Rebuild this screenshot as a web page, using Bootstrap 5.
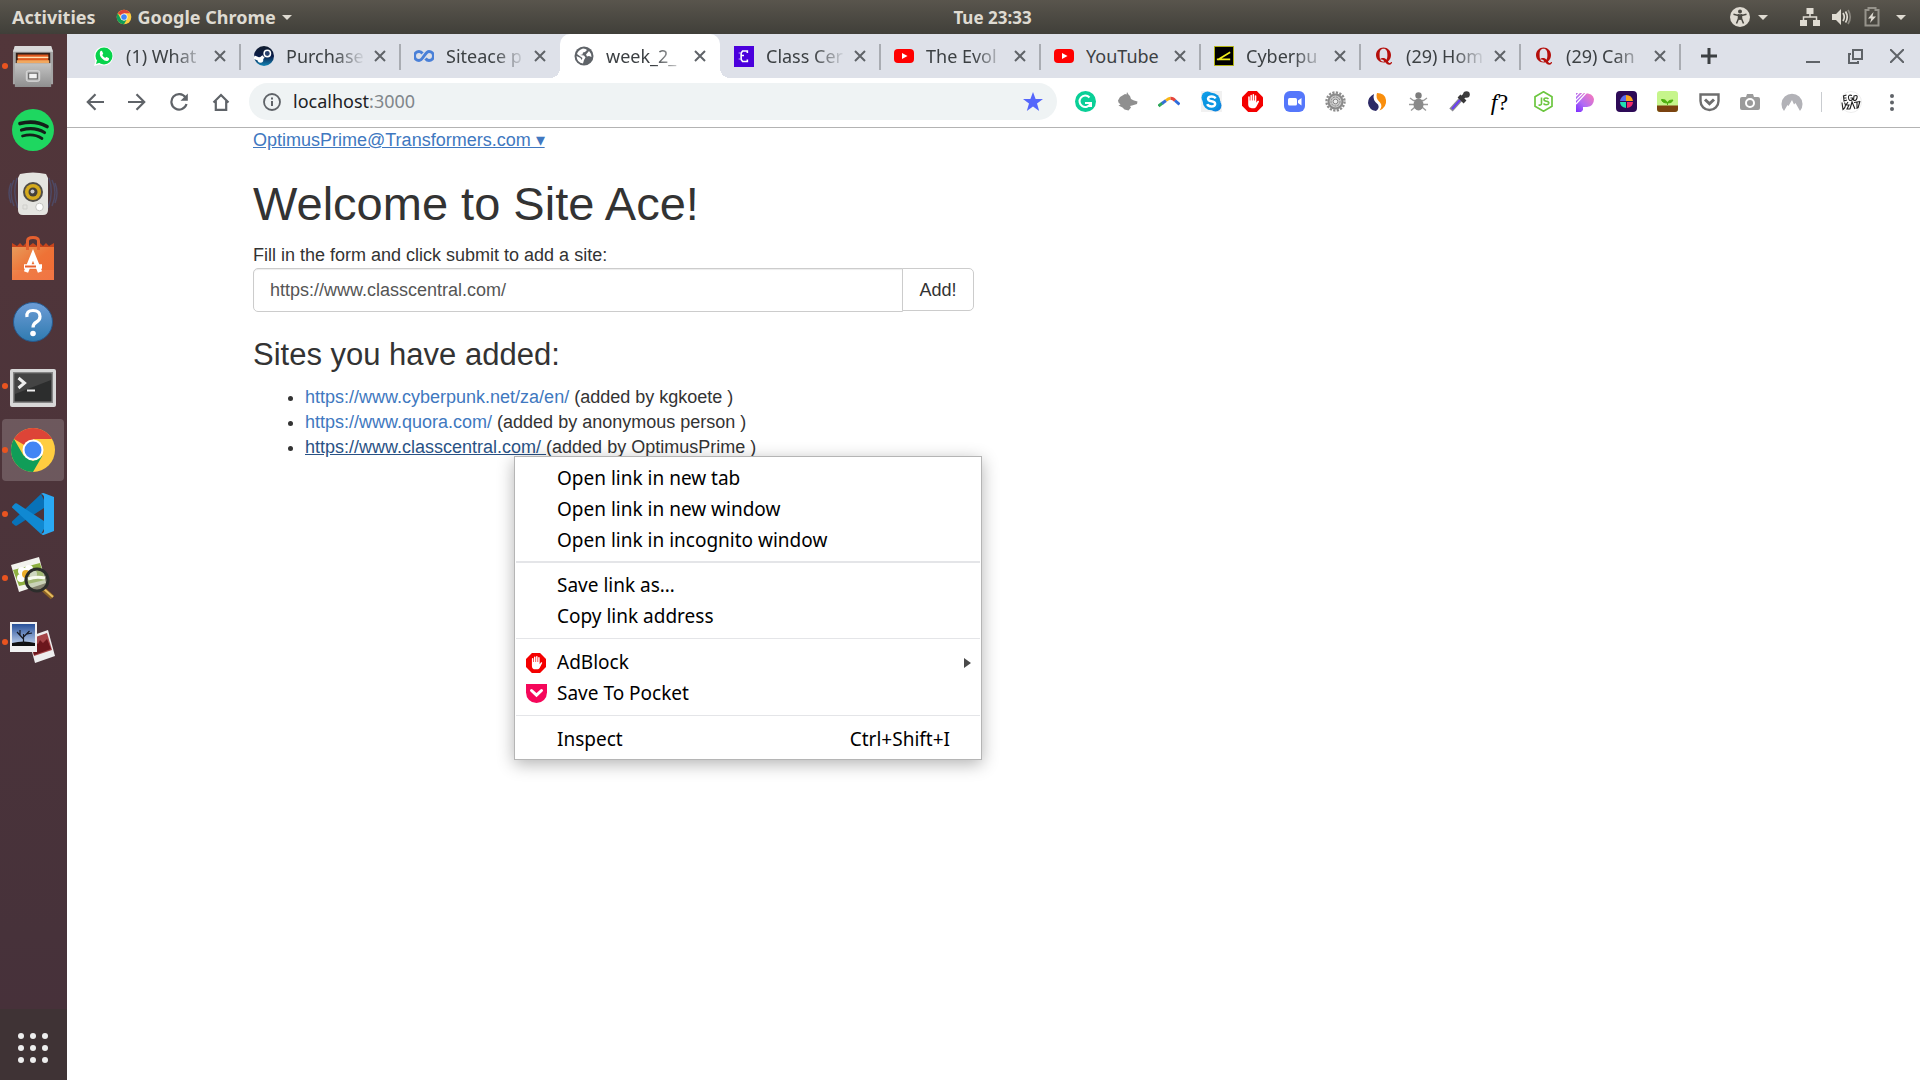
<!DOCTYPE html>
<html lang="en">
<head>
<meta charset="utf-8">
<meta name="viewport" content="width=device-width, initial-scale=1">
<title>Site Ace</title>
<link href="https://cdn.jsdelivr.net/npm/bootstrap@5.3.0/dist/css/bootstrap.min.css" rel="stylesheet">
<style>
  body { font-family: "Noto Sans", sans-serif; font-size: 18px; line-height: 25px; color: #333; background: #fff; }
  button.plain { border: 0; background: none; padding: 0; color: inherit; font: inherit; display: flex; align-items: center; justify-content: center; }
  svg { display: block; flex: none; }

  /* desktop panel */
  .sys-bar { height: 34px; background: linear-gradient(#59554d, #403f39); color: #dfdbd2; font-weight: 700; padding: 0 14px 0 12px; }
  .sys-side { flex: 1 1 0; }
  .sys-side .app-menu { margin-left: 20px; gap: 6px; }
  .sys-clock { margin-left: 67px; font-size: 17px; }
  .arrow-down { border: 5px solid transparent; border-top-color: #dfdbd2; border-bottom: 0; width: 10px; }

  /* dock */
  .dock { width: 67px; padding-right: 1px; background: linear-gradient(#52363a, #47323a 900px, #47313a calc(100% - 71px), #3f3335 calc(100% - 71px)); }
  .dock-item { height: 64px; position: relative; }
  .dock-item.running::before { content: ""; position: absolute; left: 2px; top: 29px; width: 6px; height: 6px; border-radius: 50%; background: #e95420; z-index: 1; }
  .dock-item.current::after { content: ""; position: absolute; inset: 1px 2px 1px 2px; border-radius: 4px; background: rgba(255,255,255,.18); }
  .dock-item svg { position: relative; z-index: 1; }
  .dock-apps { height: 64px; }

  /* tab strip */
  .tab-strip { height: 44px; background: #dee1e9; padding-left: 13px; color: #3c4043; }
  .web-tab { width: 160px; position: relative; padding-left: 14px; }
  .web-tab .tab-name { width: 80px; margin-left: 12px; overflow: hidden; white-space: nowrap; -webkit-mask-image: linear-gradient(90deg, #000 60%, transparent); mask-image: linear-gradient(90deg, #000 60%, transparent); }
  .web-tab.short .tab-name { -webkit-mask-image: none; mask-image: none; }
  .web-tab .tab-close { width: 20px; height: 20px; margin-left: 4px; color: #5f6368; }
  .web-tab.ruled::after { content: ""; position: absolute; right: -1px; top: 10px; width: 2px; height: 26px; background: #a9acb2; }
  .web-tab.open { background: #fff; border-radius: 10px 10px 0 0; }
  .web-tab.open::before, .web-tab.open::after { content: ""; position: absolute; bottom: 0; width: 10px; height: 10px; }
  .web-tab.open::before { left: -10px; background: radial-gradient(circle at 0 0, transparent 10px, #fff 10px); }
  .web-tab.open::after { right: -10px; background: radial-gradient(circle at 100% 0, transparent 10px, #fff 10px); }
  .strip-btn { width: 42px; height: 44px; }
  .window-btns { color: #5f6368; padding-right: 2px; }

  /* toolbar */
  .tool-bar { height: 50px; border-bottom: 1px solid #b3b3b3; padding: 0 18px 2px 18px; color: #5f6368; }
  .nav-btns { gap: 2px; margin-left: -10px; }
  .nav-btn { width: 40px; height: 36px; }
  .address { height: 37px; border-radius: 19px; background: #eff3f4; margin-left: 8px; padding: 0 14px; }
  .address-text { color: #202124; margin-left: 12px; text-decoration: none; }
  .address-text span { color: #80868b; }
  .ext-row { width: 728px; margin-left: 18px; }
  .ext-rule { width: 1px; height: 20px; background: #c9ccd0; margin: 0 18px; }
  .menu-btn { margin-left: 20px; }
  .fn-glyph { font: 24px/20px "Liberation Serif", serif; color: #000; width: 22px; }

  /* site page */
  .site { font-family: "Liberation Sans", sans-serif; }
  .site .container { --bs-gutter-x: 40px; max-width: 1521px; }
  .site .row { --bs-gutter-x: 40px; }
  .login-line { line-height: 24px; }
  .site a { color: #4078c0; text-decoration: none; }
  .site .login-line a { text-decoration: underline; }
  .site h1 { font-size: 47px; line-height: 52px; margin: 26px 0 13px; font-weight: 400; }
  .site h3 { font-size: 31px; line-height: 34px; margin: 26px 0 13px; font-weight: 400; }
  .site form label { display: block; }
  .site .form-control { height: 44px; padding: 7px 16px; font-size: 18px; line-height: 26px; color: #555; border: 1px solid #ccc; border-radius: 5px; box-shadow: inset 0 1px 1px rgba(0,0,0,.075); }
  .site .btn-add { height: 43px; padding: 7px 16px; font-size: 18px; line-height: 26px; color: #333; background: #fff; border: 1px solid #ccc; border-radius: 5px; }
  .site ul { padding-left: 52px; margin: 0; }
  .site li a.hovered { color: #2a5285; text-decoration: underline; white-space: pre; }

  /* context menu */
  .link-menu { position: absolute; left: 514px; top: 456px; width: 468px; padding: 6px 1px 4px; background: #fff; border: 1px solid #b5b5b5; box-shadow: 0 4px 16px rgba(0,0,0,.3); color: #000; font-size: 19px; z-index: 5; }
  .link-menu .menu-row { width: 100%; height: 31px; padding: 0 30px 0 10px; justify-content: flex-start; }
  .menu-icon { width: 31px; flex: none; }
  .link-menu hr { margin: 6px 0 8px; border: 0; border-top: 1px solid #e4e5e8; opacity: 1; }
  .link-menu hr.thick { border-top-width: 2px; margin: 5px 0 7px; }
  .arrow-right { border: 5px solid transparent; border-left: 7px solid #4a4a4a; border-right: 0; margin-right: -21px; }
</style>
</head>
<body class="d-flex flex-column min-vh-100">
<svg width="0" height="0" class="position-absolute" aria-hidden="true">
  <defs>
    <linearGradient id="gSteam" x1="0" y1="0" x2="0" y2="1"><stop offset="0" stop-color="#111d2e"/><stop offset=".5" stop-color="#0a1b48"/><stop offset="1" stop-color="#1387b8"/></linearGradient>
    <linearGradient id="gSteel" x1="0" y1="0" x2="0" y2="1"><stop offset="0" stop-color="#c4c4c4"/><stop offset="1" stop-color="#8f8f8f"/></linearGradient>
    <linearGradient id="gBag" x1="0" y1="0" x2="1" y2="1"><stop offset="0" stop-color="#e79b5b"/><stop offset=".5" stop-color="#ee7236"/><stop offset="1" stop-color="#f06a35"/></linearGradient>
    <linearGradient id="gHelp" x1="0" y1="0" x2="0" y2="1"><stop offset="0" stop-color="#6d9cd6"/><stop offset="1" stop-color="#2f7bb0"/></linearGradient>
    <linearGradient id="gPat" x1="0" y1="1" x2="1" y2="0"><stop offset="0" stop-color="#7b2cff"/><stop offset=".4" stop-color="#b06cf5"/><stop offset="1" stop-color="#ff7bb5"/></linearGradient>
    <linearGradient id="gSky" x1="0" y1="0" x2="0" y2="1"><stop offset="0" stop-color="#27509a"/><stop offset="1" stop-color="#c7d8f0"/></linearGradient>
  </defs>
  <symbol id="i-x" viewBox="0 0 20 20"><path d="M5 5l10 10M15 5L5 15" stroke="currentColor" stroke-width="2" fill="none"/></symbol>
  <symbol id="i-chrome" viewBox="0 0 48 48">
    <circle cx="24" cy="24" r="22" fill="#ffcd40"/>
    <path d="M24 13h19.050A22 22 0 0 0 4.950 13L24 24z" fill="#dd4437"/>
    <path d="M4.950 13L14.500 29.500L24 35L33.500 29.500L24 46A22 22 0 0 1 4.950 13z" fill="#109d58"/>
    <circle cx="24" cy="24" r="10.500" fill="#fff"/><circle cx="24" cy="24" r="8.500" fill="#4285f4"/>
  </symbol>
  <symbol id="i-youtube" viewBox="0 0 20 20"><rect x="0" y="3" width="20" height="14" rx="4" fill="#f00"/><path d="M8 7l5.500 3L8 13z" fill="#fff"/></symbol>
  <symbol id="i-quora" viewBox="0 0 20 20"><path fill-rule="evenodd" fill="#b5100c" d="M9.500 1.500C5.400 1.500 2 4.800 2 9s3.400 7.500 7.500 7.500c.7 0 1.300-.1 1.900-.2.900 1.400 2 2.400 3.900 2.400 2 0 2.700-1.400 2.700-2.700h-1c-.1.600-.5 1-1.200 1-.8 0-1.400-.6-1.900-1.500C15.800 14.100 17 11.700 17 9c0-4.200-3.400-7.500-7.500-7.500zm0 1.200c2.900 0 3.900 2.300 3.900 6.300 0 2-.3 3.600-.9 4.700-.8-1-1.900-1.700-3.500-1.700-1.300 0-2.100.4-2.700.9l.5.900c.2-.1.5-.2.900-.2 1.400 0 2 .9 2.600 2-.3.100-.5.100-.8.100-2.900 0-3.900-2.500-3.900-6.700s1-6.300 3.900-6.300z"/></symbol>
  <symbol id="i-adblock" viewBox="0 0 22 22"><path d="M6.500 0h9L22 6.500v9L15.500 22h-9L0 15.500v-9z" fill="#f40000"/><path d="M6.500 12V6.200a.8.800 0 0 1 1.600 0V10h.7V4.700a.8.800 0 0 1 1.600 0V10h.7V4a.8.800 0 0 1 1.600 0v6h.7V5.300a.8.800 0 0 1 1.600 0v7l1.200-1.700c.7-.9 2-.3 1.500.8l-2.700 5c-.6 1-1.500 1.600-2.800 1.600h-2c-2.300 0-3.700-1.500-3.700-3.800z" fill="#fff"/></symbol>
</svg>

<header class="sys-bar d-flex align-items-center">
  <div class="sys-side d-flex align-items-center">
    <button class="plain" type="button">Activities</button>
    <button class="plain app-menu" type="button"><svg width="16" height="16"><use href="#i-chrome"/></svg>Google Chrome<span class="arrow-down"></span></button>
  </div>
  <div class="sys-clock">Tue 23:33</div>
  <div class="sys-side d-flex align-items-center justify-content-end">
    <svg width="20" height="20" viewBox="0 0 20 20"><circle cx="10" cy="10" r="10" fill="#dfdbd2"/><circle cx="10" cy="4.500" r="2" fill="#4a4842"/><path d="M3.500 7.200l5 1.300v3L6.500 16.500M16.500 7.200l-5 1.300v3l2 5M8.500 8h3v4h-3z" stroke="#4a4842" stroke-width="1.500" fill="#4a4842" fill-opacity="0"/><path d="M8.500 8h3v4.500h-3z" fill="#4a4842"/></svg>
    <span class="arrow-down ms-2 me-4"></span>
    <svg class="ms-2 me-2" width="20" height="20" viewBox="0 0 20 20" fill="#dfdbd2"><path d="M6.500 1h7v6h-7zM0 13h7v6H0zM13 13h7v6h-7z"/><path d="M10 6v4M3.500 14v-4h13v4" fill="none" stroke="#dfdbd2" stroke-width="1.500"/></svg>
    <svg class="ms-1 me-2" width="20" height="20" viewBox="0 0 20 20"><path d="M0 7h4l5-5v16l-5-5H0z" fill="#dfdbd2"/><path d="M11 6q2.500 4 0 8M13.500 4.500q3.500 5.500 0 11" stroke="#dfdbd2" stroke-width="1.700" fill="none"/><path d="M16 3q4.500 7 0 14" stroke="#8a877f" stroke-width="1.700" fill="none"/></svg>
    <svg class="ms-1 me-2" width="16" height="20" viewBox="0 0 16 20"><path d="M1.500 3h3V1h7v2h3v15.500h-13z" fill="none" stroke="#96938b" stroke-width="2"/><path d="M9.500 5L4 11.500h3.300L6 16l6-6.500H8.500z" fill="#dfdbd2"/></svg>
    <span class="arrow-down ms-2"></span>
  </div>
</header>

<div class="d-flex flex-grow-1">
  <nav class="dock d-flex flex-column" aria-label="Dock">
    <button type="button" class="plain dock-item running" aria-label="Files"><svg width="42" height="44" viewBox="0 0 44 46"><path d="M3 2h38l2 6v34H1V8z" fill="#a5a5a5"/><path d="M3 2h38l2 6H1z" fill="#d9d9d9"/><path d="M4 9h36v11H4z" fill="#33201a"/><path d="M6 11h32v9H6z" fill="#e0591d"/><path d="M6 14h32" stroke="#ffdfb0" stroke-width="1.500"/><path d="M5 17h34v3H5z" fill="#f0a860"/><path d="M3 20h38v25H3z" fill="url(#gSteel)"/><rect x="15" y="28" width="14" height="11" rx="2" fill="#bcbcbc" stroke="#dcdcdc"/><rect x="17.500" y="30.500" width="9" height="6" fill="#f2f2f2" stroke="#555"/></svg></button>
    <button type="button" class="plain dock-item" aria-label="Spotify"><svg width="42" height="42" viewBox="0 0 42 42"><circle cx="21" cy="21" r="21" fill="#1ed760"/><g fill="none" stroke="#14201a" stroke-linecap="round"><path d="M8 14.500q15-4 27 3" stroke-width="3.700"/><path d="M9.500 21q13-3.500 23 2.500" stroke-width="3.200"/><path d="M10.500 27q11-3 19.500 2.500" stroke-width="2.700"/></g></svg></button>
    <button type="button" class="plain dock-item" aria-label="Rhythmbox"><svg width="50" height="44" viewBox="0 0 50 44"><path d="M6 8q-6 12 0 26M3 11q-4 10 0 20M9 6q-5 15 1 30M44 8q6 12 0 26M47 11q4 10 0 20M41 6q5 15-1 30" fill="none" stroke="#4d5680" stroke-opacity=".6" stroke-width="1.500"/><path d="M12 2q13-3 26 0l2 4v32q0 5-5 5H15q-5 0-5-5V6z" fill="#e4e4e0"/><circle cx="25" cy="20" r="10" fill="#504d48"/><circle cx="25" cy="20" r="8" fill="#d5aa1c"/><circle cx="25" cy="20" r="4.500" fill="#45413b"/><circle cx="24.500" cy="19.500" r="2" fill="#ccc"/><circle cx="31.500" cy="35" r="3.800" fill="#fff" stroke="#c6c6c2"/><path d="M15 33h4v4h-4z" fill="none" stroke="#cfcfcb"/></svg></button>
    <button type="button" class="plain dock-item" aria-label="Ubuntu Software"><svg width="42" height="44" viewBox="0 0 42 44"><path d="M0 7l5 3 3-3 3 3 3-3 3 3 4-3 4 3 3-3 3 3 3-3 3 3 5-3v7H0z" fill="#c8451c"/><path d="M0 11h42v33H0z" fill="url(#gBag)"/><path d="M0 34h42v10H0z" fill="#fff" opacity=".07"/><path d="M15.500 14V5q0-3.500 5.500-3.500T26.500 5v9" fill="none" stroke="#e4602f" stroke-width="3"/><path d="M14 36l7-17 7 17M12 30.500h18" fill="none" stroke="#fff" stroke-width="4.500"/><path d="M13 30.500h11" stroke="#e8602c" stroke-width="2"/></svg></button>
    <button type="button" class="plain dock-item" aria-label="Help"><svg width="40" height="40" viewBox="0 0 40 40"><circle cx="20" cy="20" r="19.500" fill="url(#gHelp)" stroke="#27598d"/><path d="M14 15q-1-6.500 6-6.500t7 6q0 3.500-3.500 5.500T20 25.500" fill="none" stroke="#fff" stroke-width="3.200"/><circle cx="20" cy="31.500" r="2.800" fill="#fff"/></svg></button>
    <button type="button" class="plain dock-item running" aria-label="Terminal"><svg width="46" height="42" viewBox="0 -4 46 42"><rect width="46" height="38" rx="2" fill="#d8d8d8"/><rect x="3" y="3" width="40" height="31" fill="#858585"/><rect x="4.500" y="4.500" width="37" height="28" fill="#2c2d2d"/><path d="M5 5h36v6L5 25z" fill="#444"/><path d="M8.500 9l6 5-6 5" fill="none" stroke="#eee" stroke-width="3"/><path d="M17 21.500h8" stroke="#eee" stroke-width="2"/></svg></button>
    <button type="button" class="plain dock-item running current" aria-label="Google Chrome"><svg width="48" height="48"><use href="#i-chrome"/></svg></button>
    <button type="button" class="plain dock-item running" aria-label="Visual Studio Code"><svg width="42" height="42" viewBox="0 0 42 42"><path d="M0 28.500L29 1l3 6v8L5 32.500q-1 .5-2 0L0 30z" fill="#0872b8"/><path d="M0 13.500L3 10.500q1-.5 2 0L32 28v8l-3 5L0 14.500z" fill="#1089d2"/><path d="M31.500 0L42 4v34l-10.500 4q-1.500 0-2.500-1.500 2.500.5 3-2V3.500q-.5-2.500-3-2.500 1-1 2.500-1z" fill="#2aa9f3"/></svg></button>
    <button type="button" class="plain dock-item running" aria-label="Image Viewer"><svg width="46" height="46" viewBox="0 0 46 46"><path d="M1 10L29 2l7 26L9 37z" fill="#f3f3ee"/><path d="M3 15L30 8l5 17L9 31z" fill="#8eb041"/><g fill="#fff"><circle cx="12" cy="16" r="4"/><circle cx="19" cy="14" r="4"/><circle cx="23" cy="19" r="4"/><circle cx="11" cy="23" r="4"/></g><circle cx="16" cy="19" r="4" fill="#edae2a"/><path d="M33 34l9.500 8.500" stroke="#8b6224" stroke-width="5"/><path d="M34 34l9 8" stroke="#e7bd60" stroke-width="2"/><circle cx="27" cy="25" r="11" fill="#aebd94" fill-opacity=".6" stroke="#2c2d2b" stroke-width="3"/><path d="M18 24q8-3 17-1" stroke="#f8fbf0" stroke-width="3" fill="none"/></svg></button>
    <button type="button" class="plain dock-item running" aria-label="Shotwell"><svg width="46" height="42" viewBox="0 0 46 42"><path d="M18 16l20-7 7 26-20 7z" fill="#eee"/><path d="M20 18l17-6 5 17-18 6z" fill="#a54548"/><path d="M22 26l3-5 3 2 2-4 3 3 4-4 4 10-17 6z" fill="#6b161c"/><rect x="0" y="1" width="27" height="30" fill="#f1f1f1"/><rect x="2" y="3" width="23" height="22" fill="url(#gSky)"/><path d="M2 22q12-3 23 0v3H2z" fill="#111"/><path d="M13.500 23V13M13.500 18L7 11M13.500 16l6-6M10 14V9M17 13l5-1" stroke="#161922" stroke-width="1.200" fill="none"/></svg></button>
    <button type="button" class="plain dock-apps mt-auto" aria-label="Show Applications"><svg width="30" height="30" viewBox="0 0 30 30" fill="#eee"><circle cx="3" cy="3" r="3"/><circle cx="15" cy="3" r="3"/><circle cx="27" cy="3" r="3"/><circle cx="3" cy="15" r="3"/><circle cx="15" cy="15" r="3"/><circle cx="27" cy="15" r="3"/><circle cx="3" cy="27" r="3"/><circle cx="15" cy="27" r="3"/><circle cx="27" cy="27" r="3"/></svg></button>
  </nav>

  <div class="flex-grow-1 d-flex flex-column">
    <div class="tab-strip d-flex" role="tablist">
      <div class="web-tab ruled d-flex align-items-center" role="tab"><svg width="20" height="20" viewBox="0 0 20 20"><path d="M0 20l1.500-5.300A9.500 9.500 0 1 1 5.500 18.500z" fill="#fff"/><circle cx="10" cy="10" r="8.500" fill="#08d34c"/><path d="M2 18l1.300-4.500 3 3z" fill="#08d34c"/><path d="M6 6q1-2 2-1l1.200 2.400q0 .7-1 1.600 1 2 3 3 .8-1.200 1.500-1l2.300 1.200q.5 2-1.500 2.700Q11 15.500 8 12.500T6 6z" fill="#fff"/></svg><span class="tab-name">(1) What</span><button type="button" class="plain tab-close" aria-label="Close"><svg width="20" height="20"><use href="#i-x"/></svg></button></div>
      <div class="web-tab ruled d-flex align-items-center" role="tab"><svg width="20" height="20" viewBox="0 0 20 20"><circle cx="10" cy="10" r="10" fill="url(#gSteam)"/><path d="M0 11l6 2.500 3.500-3" stroke="#fff" stroke-width="3.500" fill="none"/><circle cx="6.500" cy="14" r="2.800" fill="#fff"/><circle cx="13.300" cy="7.500" r="3.200" fill="#29416d" stroke="#fff" stroke-width="1.500"/></svg><span class="tab-name">Purchase</span><button type="button" class="plain tab-close" aria-label="Close"><svg width="20" height="20"><use href="#i-x"/></svg></button></div>
      <div class="web-tab d-flex align-items-center" role="tab"><svg width="20" height="20" viewBox="0 0 20 20"><path d="M8.500 7.500Q7 5.500 5 5.500a4.300 4.300 0 0 0 0 9c4 0 6-9 10-9a4.300 4.300 0 0 1 0 9q-2 0-3.500-2" fill="none" stroke="#4a80d8" stroke-width="3"/></svg><span class="tab-name">Siteace p</span><button type="button" class="plain tab-close" aria-label="Close"><svg width="20" height="20"><use href="#i-x"/></svg></button></div>
      <div class="web-tab open d-flex align-items-center" role="tab" aria-selected="true"><svg width="20" height="20" viewBox="0 0 20 20"><circle cx="10" cy="10" r="9.500" fill="#5f6368"/><path d="M9 2.500q3 0 4 1.500l-2 2-2 .5-.5 2L6 9l4 .5 1.500 2L10 14l-1 3.500Q3 17 2.500 10l4 2 1 2 1-2L5 9.500 3 8Q4 4 9 2.500zM15 5q2.500 2.500 2.500 6L15 10l-2 .5-1-2z" fill="#fff"/></svg><span class="tab-name">week_2_</span><button type="button" class="plain tab-close" aria-label="Close"><svg width="20" height="20"><use href="#i-x"/></svg></button></div>
      <div class="web-tab ruled d-flex align-items-center" role="tab"><svg width="20" height="21" viewBox="0 0 21 21" preserveAspectRatio="none"><path d="M0 0h21v21H0z" fill="#4b00dc"/><path d="M14 7V5H9L7.500 7v2.500h3M7.500 10v3.500L9 15.500h5v-2" fill="none" stroke="#fff" stroke-width="1.700"/><path d="M5 7h1M5 13h1" stroke="#fff"/></svg><span class="tab-name">Class Cer</span><button type="button" class="plain tab-close" aria-label="Close"><svg width="20" height="20"><use href="#i-x"/></svg></button></div>
      <div class="web-tab ruled d-flex align-items-center" role="tab"><svg width="20" height="20"><use href="#i-youtube"/></svg><span class="tab-name">The Evol</span><button type="button" class="plain tab-close" aria-label="Close"><svg width="20" height="20"><use href="#i-x"/></svg></button></div>
      <div class="web-tab ruled short d-flex align-items-center" role="tab"><svg width="20" height="20"><use href="#i-youtube"/></svg><span class="tab-name">YouTube</span><button type="button" class="plain tab-close" aria-label="Close"><svg width="20" height="20"><use href="#i-x"/></svg></button></div>
      <div class="web-tab ruled d-flex align-items-center" role="tab"><svg width="20" height="20" viewBox="0 0 21 21"><path d="M.5.500h20v20H.500z" fill="#000" stroke="#b8b80a"/><path d="M17 6.500L4 14.500M3 14h14" stroke="#f0ee1c" stroke-width="1.700"/></svg><span class="tab-name">Cyberpu</span><button type="button" class="plain tab-close" aria-label="Close"><svg width="20" height="20"><use href="#i-x"/></svg></button></div>
      <div class="web-tab ruled d-flex align-items-center" role="tab"><svg width="20" height="20"><use href="#i-quora"/></svg><span class="tab-name">(29) Hom</span><button type="button" class="plain tab-close" aria-label="Close"><svg width="20" height="20"><use href="#i-x"/></svg></button></div>
      <div class="web-tab ruled d-flex align-items-center" role="tab"><svg width="20" height="20"><use href="#i-quora"/></svg><span class="tab-name">(29) Can</span><button type="button" class="plain tab-close" aria-label="Close"><svg width="20" height="20"><use href="#i-x"/></svg></button></div>
      <button type="button" class="plain strip-btn ms-2" aria-label="New tab"><svg width="16" height="16" viewBox="0 0 16 16"><path d="M8 0v16M0 8h16" stroke="#3c4043" stroke-width="3"/></svg></button>
      <div class="window-btns d-flex ms-auto">
        <button type="button" class="plain strip-btn" aria-label="Minimize"><svg width="14" height="14" viewBox="0 0 14 14"><path d="M0 13h14" stroke="currentColor" stroke-width="2"/></svg></button>
        <button type="button" class="plain strip-btn" aria-label="Restore"><svg width="15" height="15" viewBox="0 0 15 15"><path d="M5 1h9v9H5zM3 5H1v9h9v-2" fill="none" stroke="currentColor" stroke-width="2"/></svg></button>
        <button type="button" class="plain strip-btn" aria-label="Close window"><svg width="14" height="14" viewBox="0 0 14 14"><path d="M0 0l14 14M14 0L0 14" stroke="currentColor" stroke-width="2"/></svg></button>
      </div>
    </div>

    <div class="tool-bar d-flex align-items-center">
      <div class="nav-btns d-flex">
        <button type="button" class="plain nav-btn" aria-label="Back"><svg width="18" height="18" viewBox="0 0 18 18"><path d="M18 9H2M9.500 1.300L1.800 9l7.700 7.700" fill="none" stroke="currentColor" stroke-width="2.200"/></svg></button>
        <button type="button" class="plain nav-btn" aria-label="Forward"><svg width="18" height="18" viewBox="0 0 18 18"><path d="M0 9h16M8.500 1.300L16.200 9l-7.700 7.700" fill="none" stroke="currentColor" stroke-width="2.200"/></svg></button>
        <button type="button" class="plain nav-btn" aria-label="Reload"><svg width="18" height="18" viewBox="0 0 18 18"><path d="M15.500 4.500A7.700 7.700 0 1 0 16.500 11" fill="none" stroke="currentColor" stroke-width="2.200"/><path d="M17.800.500v7.300h-7.300z" fill="currentColor"/></svg></button>
        <button type="button" class="plain nav-btn" aria-label="Home"><svg width="18" height="18" viewBox="0 0 18 18"><path d="M1.500 9.500L9 2l7.500 7.500M3.800 8v8.800h10.400V8" fill="none" stroke="currentColor" stroke-width="2.200"/></svg></button>
      </div>
      <div class="address flex-grow-1 d-flex align-items-center">
        <svg width="18" height="18" viewBox="0 0 18 18"><circle cx="9" cy="9" r="8" fill="none" stroke="currentColor" stroke-width="1.800"/><path d="M9 8v5M9 4.500v2" stroke="currentColor" stroke-width="2"/></svg>
        <a class="address-text" href="#">localhost<span>:3000</span></a>
        <svg class="ms-auto" width="20" height="20" viewBox="0 0 20 20"><path d="M10 0l2.600 7H20l-6 4.500 2.200 7.500L10 14.500 3.800 19 6 11.500 0 7h7.400z" fill="#5566fb"/></svg>
      </div>
      <div class="ext-row d-flex align-items-center justify-content-between">
        <svg width="21" height="21" viewBox="0 0 21 21"><circle cx="10.500" cy="10.500" r="10.500" fill="#0acf97"/><path d="M14.500 6.500A5.700 5.700 0 1 0 15.500 12.500M10 12h6v4" fill="none" stroke="#fff" stroke-width="2"/></svg>
        <svg width="21" height="21" viewBox="0 0 21 21"><path d="M1 9.500L3 6l5-3 1.500.5L10 1l1.500 2.500L13 5l1 3 3 1.500 3.500 1-.5 2.500-5 1.500-2 .5 1 1.500-2.500 3-4-1-2-2-4-2 2-1-2-2z" fill="#8f8f8f"/></svg>
        <svg width="22" height="21" viewBox="0 0 22 21" fill="none" stroke-width="3"><path d="M.5 15l4-3" stroke="#2fa85b"/><path d="M4 12.500L8 9.500" stroke="#356fd6"/><path d="M8 9.500q2.500-2.300 4.500-2.300" stroke="#f9b516"/><path d="M12.500 7.200q3 0 4.500 2.500" stroke="#e6453b"/><path d="M17 9.500l4.500 4" stroke="#2e6bdb"/></svg>
        <svg width="21" height="21" viewBox="0 0 21 21"><path d="M0 0h21v21H0z" fill="#f1f1f1"/><circle cx="6.500" cy="6.500" r="6" fill="#0f9de8"/><circle cx="14.500" cy="14.500" r="6" fill="#0f86de"/><circle cx="10.500" cy="10.500" r="8.800" fill="#0c96e2"/><path d="M14.500 7.500q-1-2-4-2t-3.500 2.300q0 2 3.500 2.500t3.700 2.700q-.2 2.500-3.700 2.500t-4.200-2.300" fill="none" stroke="#fff" stroke-width="2.400"/></svg>
        <svg width="21" height="21"><use href="#i-adblock"/></svg>
        <svg width="21" height="21" viewBox="0 0 21 21"><rect width="21" height="21" rx="6" fill="#5577fb"/><rect x="4" y="7" width="9" height="7.500" rx="1.500" fill="#fff"/><path d="M14 9.500L17.500 7v7.500L14 12z" fill="#fff"/></svg>
        <svg width="21" height="21" viewBox="0 0 21 21" fill="none"><circle cx="10.500" cy="10.500" r="9" stroke="#8c8c8c" stroke-width="2.400" stroke-dasharray="2.200 1.340"/><circle cx="10.500" cy="10.500" r="7" fill="#c9c9c9" stroke="#8a8a8a" stroke-width="2"/><circle cx="10.500" cy="10.500" r="4.500" stroke="#888" stroke-dasharray="2 1"/><circle cx="10.500" cy="10.500" r="2.300" fill="#eee" stroke="#888"/></svg>
        <svg width="20" height="20" viewBox="0 0 20 20"><path d="M7 2Q1 5 1 11q1 7 8 8 4-3 2-6.500Q5 8 7 2z" fill="#2d2a66"/><path d="M10 1q8 0 9 7 1 7-6.500 10.500Q16 14 13 10.500 8 6 10 1z" fill="#f98e0c"/></svg>
        <svg width="21" height="21" viewBox="0 0 21 21"><g stroke="#9a9a9a" stroke-width="1.300" fill="none"><path d="M2 7l3.500 2.500h10L19 7M1 13.500h19M3 19.500l3.500-3h8l3.500 3"/></g><ellipse cx="10.500" cy="13.500" rx="5" ry="6" fill="#8a8a8a"/><circle cx="10.500" cy="4.500" r="3.200" fill="#7c7c7c"/></svg>
        <svg width="21" height="21" viewBox="0 0 21 21"><path d="M2 19L12 8" stroke="#8a8a90" stroke-width="4.500"/><path d="M3 18l8-9" stroke="#6a3ff2" stroke-width="2"/><path d="M10 5l6 6M13 7l4-4" stroke="#383838" stroke-width="4"/><circle cx="17.500" cy="3.500" r="3.300" fill="#3d3d3d"/></svg>
        <span class="fn-glyph"><i>f</i>?</span>
        <svg width="21" height="21" viewBox="0 0 21 21" fill="none" stroke="#6cc63f"><path d="M10.500.8L19 5.700v9.600l-8.500 4.900L2 15.300V5.700z" stroke-width="1.700"/><path d="M8.500 6.500v6q0 2-3 1.500M15.500 8q-1-1-2.500-1-2 0-2 1.500t2.500 1.700q2.500.3 2.300 2-.3 1.600-2.500 1.600-1.800 0-2.800-1.300" stroke-width="1.600"/></svg>
        <svg width="20" height="20" viewBox="0 0 20 20"><path d="M1 1h8q9 0 10 6 0 7-7 8H8v3l-2 2H1z" fill="url(#gPat)"/><path d="M0 5l5-5M0 9l9-9M1 12L12 0" stroke="#fff" stroke-width="1.200"/></svg>
        <svg width="21" height="21" viewBox="0 0 21 21"><rect width="21" height="21" rx="4" fill="#2d0a57"/><path d="M10 10V4a6.500 6.500 0 0 0-6 6z" fill="#5b6df0"/><path d="M10 4q6 0 7 6h-7z" fill="#fca41c"/><path d="M4 11h6v6q-6-1-6-6z" fill="#1fe0b3"/><path d="M11 11h6q0 5-6 6z" fill="#f2296b"/></svg>
        <svg width="21" height="21" viewBox="0 0 21 21"><rect width="21" height="21" rx="3" fill="#c6f58b"/><path d="M0 14.500h21V18q0 3-3 3H3q-3 0-3-3z" fill="#7b4310"/><path d="M10.500 14v-3M10.500 12Q5 12 4.500 8.500 9 8 10.500 12q.5-3 5.500-3-1 3.500-5.500 3z" fill="#4fb010" stroke="#4fb010"/></svg>
        <svg width="21" height="20" viewBox="0 0 21 20"><path d="M1.500 2.500h18v6.500a9 9 0 0 1-18 0z" fill="none" stroke="#6e6e6e" stroke-width="2.400"/><path d="M6 7.500l4.500 4.300L15 7.500" fill="none" stroke="#6e6e6e" stroke-width="3"/></svg>
        <svg width="20" height="20" viewBox="0 0 20 20"><path d="M2 5h4l1-3h6l1 3h4q2 0 2 2v9q0 2-2 2H2q-2 0-2-2V7q0-2 2-2z" fill="#9b9b9b"/><circle cx="10" cy="11" r="4" fill="#999" stroke="#fff" stroke-width="2"/></svg>
        <svg width="22" height="20" viewBox="0 0 22 20"><path d="M3 19A10.500 10.500 0 1 1 19 19L14.500 11l-1.500 1.500L11 8l-3.500 6L6.500 13z" fill="#b2b2b7"/></svg>
      </div>
      <span class="ext-rule"></span>
      <svg width="22" height="22" viewBox="0 0 22 22"><circle cx="11" cy="11" r="10.500" fill="#fff" stroke="#eee"/><g fill="none" stroke="#222" stroke-width="1.100"><path d="M6.500 4L3.500 5l.5 5 3-1M4 7h2.500M12 4.500Q8 3 8.500 7t4 1.500V7h-2M14 5q4-1.500 3 2t-3.500 2zM2 11.500l1 7q4-3 1.500-7M8 11l-2 3h3l-2 4h3M10 18l2-7 3 7M14 11.500l6-1M17 11v7M20 10l-2 7"/></g></svg>
      <button type="button" class="plain menu-btn" aria-label="Menu"><svg width="20" height="20" viewBox="0 0 20 20" fill="currentColor"><circle cx="10" cy="4" r="2"/><circle cx="10" cy="10.500" r="2"/><circle cx="10" cy="17" r="2"/></svg></button>
    </div>

    <main class="site flex-grow-1">
      <div class="container">
        <div class="login-line"><a href="#">OptimusPrime@Transformers.com ▾</a></div>
        <h1>Welcome to Site Ace!</h1>
        <div class="row"><div class="col-6">
          <form>
            <label for="site-url">Fill in the form and click submit to add a site:</label>
            <div class="input-group align-items-start">
              <input id="site-url" class="form-control" type="text" value="https://www.classcentral.com/">
              <button type="button" class="btn btn-add">Add!</button>
            </div>
          </form>
        </div></div>
        <h3>Sites you have added:</h3>
        <ul>
          <li><a href="#">https://www.cyberpunk.net/za/en/</a> (added by kgkoete )</li>
          <li><a href="#">https://www.quora.com/</a> (added by anonymous person )</li>
          <li><a class="hovered" href="#">https://www.classcentral.com/ </a>(added by OptimusPrime )</li>
        </ul>
      </div>
    </main>
  </div>
</div>

<div class="link-menu" role="menu">
  <button type="button" class="plain menu-row" role="menuitem"><span class="menu-icon"></span>Open link in new tab</button>
  <button type="button" class="plain menu-row" role="menuitem"><span class="menu-icon"></span>Open link in new window</button>
  <button type="button" class="plain menu-row" role="menuitem"><span class="menu-icon"></span>Open link in incognito window</button>
  <hr class="thick">
  <button type="button" class="plain menu-row" role="menuitem"><span class="menu-icon"></span>Save link as…</button>
  <button type="button" class="plain menu-row" role="menuitem"><span class="menu-icon"></span>Copy link address</button>
  <hr>
  <button type="button" class="plain menu-row" role="menuitem"><span class="menu-icon"><svg width="20" height="20"><use href="#i-adblock"/></svg></span>AdBlock<span class="arrow-right ms-auto"></span></button>
  <button type="button" class="plain menu-row" role="menuitem"><span class="menu-icon"><svg width="21" height="19" viewBox="0 0 21 19"><path d="M0 0h21v8.500a10.500 10.500 0 0 1-21 0z" fill="#f5075a"/><path d="M5.500 6.500l5 4.700 5-4.700" fill="none" stroke="#fff" stroke-width="3" stroke-linecap="round"/></svg></span>Save To Pocket</button>
  <hr>
  <button type="button" class="plain menu-row" role="menuitem"><span class="menu-icon"></span>Inspect<span class="ms-auto">Ctrl+Shift+I</span></button>
</div>
<script src="https://cdn.jsdelivr.net/npm/bootstrap@5.3.0/dist/js/bootstrap.bundle.min.js"></script>
</body>
</html>
